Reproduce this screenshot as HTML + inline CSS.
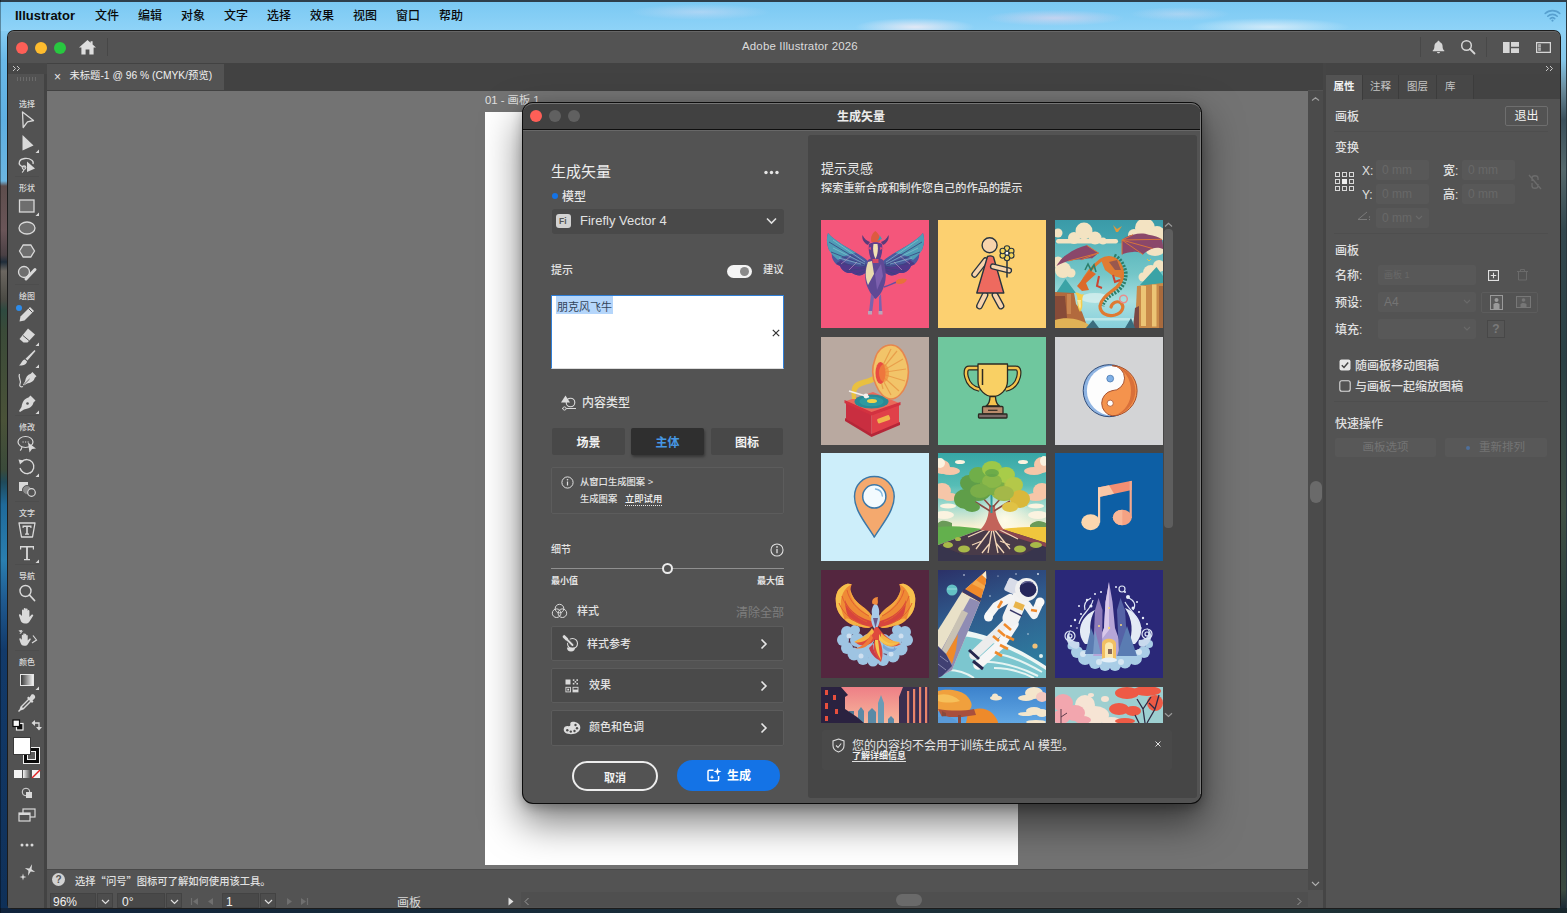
<!DOCTYPE html>
<html lang="zh-CN">
<head>
<meta charset="utf-8">
<title>Adobe Illustrator 2026</title>
<style>
*{box-sizing:border-box;margin:0;padding:0}
html,body{width:1567px;height:913px;overflow:hidden;background:#1f3a4a}
body{font-family:"Liberation Sans","Noto Sans CJK SC",sans-serif;color:#e6e6e6;font-size:12px;position:relative}
.abs{position:absolute}
.t{position:absolute;white-space:nowrap;line-height:1}
svg{position:absolute;overflow:visible}
/* desktop */
#desk{left:0;top:0;width:1567px;height:913px;background:linear-gradient(180deg,#7ecbf3 0,#86cdf2 30px,#6ab9e8 60px,#5fb0e2 120px,#6bb5e0 181px,#5d4d4c 186px,#6a5558 230px,#4a4044 255px,#1f2d3a 262px,#6b6660 271px,#4a4a44 300px,#2e4a40 310px,#3a4a38 330px,#4a5238 420px,#3a4a3a 470px,#1f4a5a 482px,#1f6a9a 505px,#2a7fb0 560px,#1f5a90 600px,#123a6a 650px,#0f3058 913px)}
#deskR{left:1556px;top:30px;width:11px;height:883px;background:linear-gradient(180deg,#8fd2f6 0,#86c8ea 30px,#6a8a9a 60px,#3a4f5a 90px,#55686c 140px,#33474e 200px,#2a4044 330px,#3f4f44 480px,#2a3e3c 600px,#27383a 760px,#3b4a40 860px,#1c2a34 878px,#16222c 883px)}
#menubar{left:0;top:0;width:1567px;height:31px;background:radial-gradient(ellipse 60px 9px at 915px 27px,rgba(255,240,245,.75),rgba(255,240,245,0)),radial-gradient(ellipse 70px 8px at 1055px 18px,rgba(245,215,235,.55),rgba(245,215,235,0)),radial-gradient(ellipse 80px 9px at 1270px 27px,rgba(255,250,250,.6),rgba(255,250,250,0)),radial-gradient(ellipse 70px 8px at 700px 12px,rgba(235,225,245,.4),rgba(235,225,245,0)),radial-gradient(ellipse 50px 7px at 1180px 14px,rgba(240,225,240,.35),rgba(240,225,240,0)),linear-gradient(180deg,#79c8f3 0,#8fd3f7 100%)}
#menubar .t{color:#0a0a0a;top:10px;font-size:12px;font-weight:500}
/* app window */
#win{left:8px;top:31px;width:1552px;height:877px;background:#535353;border-radius:6px 6px 4px 4px;overflow:hidden;box-shadow:0 0 0 1px #1c1c1c}

/* chrome */
#titlebar{left:8px;top:31px;width:1552px;height:32px;background:#535353;border-radius:6px 6px 0 0;border-top:1px solid #666}
#tabbar{left:8px;top:63px;width:1318px;height:27px;background:#424242}
#tab{left:47px;top:64px;width:177px;height:26px;background:#535353}
#tools{left:8px;top:63px;width:39px;height:845px;background:#525252;border-right:3px solid #434343}
#toolstop{left:8px;top:63px;width:39px;height:11px;background:#474747}
#canvas{left:47px;top:90px;width:1261px;height:779px;background:#737373;border-top:1px solid #424242}
#artboard{left:485px;top:112px;width:533px;height:753px;background:#fff}
#vscroll{left:1308px;top:91px;width:15px;height:799px;background:#4b4b4b}
#helpbar{left:47px;top:869px;width:1261px;height:21px;background:#535353;border-top:1px solid #484848}
#botbar{left:47px;top:890px;width:1277px;height:18px;background:#535353}
#hscroll{left:521px;top:892px;width:787px;height:15px;background:#4f4f4f}
#rgap{left:1323px;top:63px;width:3px;height:845px;background:#454545}
#rpanel{left:1326px;top:63px;width:234px;height:845px;background:#535353}
#rtop{left:1326px;top:63px;width:234px;height:11px;background:#444}
#rtabs{left:1326px;top:74px;width:234px;height:25px;background:#434343}
.rtab{position:absolute;top:75px;height:24px;background:#474747;color:#c4c4c4;font-size:10.5px;line-height:22px;text-align:center;border-right:1px solid #3c3c3c}
.lbl{position:absolute;white-space:nowrap;line-height:1;font-size:8px;font-weight:500;color:#dadada;left:7px;width:40px;text-align:center}
.tool{left:17px;width:20px;height:20px}
.rp{color:#e0e0e0;font-size:12px;font-weight:500;margin-top:1px}
.hr{position:absolute;left:1334px;width:214px;height:1px;background:#4e4e4e}
.fld{position:absolute;background:#585858;border-radius:2px;color:#686868;font-size:12px;line-height:21px;padding-left:6px}

/* dialog */
#dlg{left:523px;top:103px;width:678px;height:700px;background:#535353;border-radius:10px;box-shadow:0 0 0 1px #0c0c0c,0 18px 38px 2px rgba(0,0,0,.5),0 4px 12px rgba(0,0,0,.28)}
#dlgtitle{left:523px;top:103px;width:678px;height:27px;background:#414141;border-radius:10px 10px 0 0;border-top:1px solid #747474;border-bottom:1px solid #0e0e0e}
#dlgright{left:808px;top:135px;width:389px;height:663px;background:#464646;border-radius:3px}
.d{color:#e4e4e4}
.row{position:absolute;left:551px;width:233px;height:35.5px;background:#4a4a4a;border:1px solid #5c5c5c;border-radius:2px}
.seg{position:absolute;top:428px;height:27px;background:#484848;border-radius:2px;color:#f2f2f2;font-size:12px;font-weight:bold;text-align:center;line-height:30px}
.th{position:absolute;width:108px;height:108px;overflow:hidden}
.th svg{left:0;top:0}
</style>
</head>
<body>
<div id="desk" class="abs"></div>
<div id="deskR" class="abs"></div>
<div id="menubar" class="abs">
  <span class="t" style="left:15px;top:9px;font-weight:bold;font-size:13px">Illustrator</span>
  <span class="t" style="left:95px">文件</span>
  <span class="t" style="left:138px">编辑</span>
  <span class="t" style="left:181px">对象</span>
  <span class="t" style="left:224px">文字</span>
  <span class="t" style="left:267px">选择</span>
  <span class="t" style="left:310px">效果</span>
  <span class="t" style="left:353px">视图</span>
  <span class="t" style="left:396px">窗口</span>
  <span class="t" style="left:439px">帮助</span>
</div>
<div class="abs" style="left:0;top:0;width:1567px;height:1.5px;background:#2e3f4c"></div><div class="abs" style="left:1566px;top:0;width:1px;height:913px;background:#2a3840"></div>
<div class="abs" style="left:0;top:908px;width:1567px;height:5px;background:linear-gradient(90deg,#10233c 0,#14283a 300px,#1a2e38 800px,#1e3236 1300px,#18262c 1567px)"></div><div class="abs" style="left:0;top:0;width:1px;height:913px;background:rgba(0,0,0,.35)"></div>
<div id="win" class="abs"></div>
<div id="titlebar" class="abs"></div>
<div id="tabbar" class="abs"></div>
<div id="tab" class="abs"></div>
<div id="canvas" class="abs"></div>
<div id="artboard" class="abs"></div>
<div id="tools" class="abs"></div>
<div id="toolstop" class="abs"></div>
<div id="vscroll" class="abs"></div>
<div id="helpbar" class="abs"></div>
<div id="botbar" class="abs"></div>
<div id="hscroll" class="abs"></div>
<div id="rgap" class="abs"></div>
<div id="rpanel" class="abs"></div>
<div id="rtop" class="abs"></div>
<div id="rtabs" class="abs"></div>
<!--TITLE-->
<div class="abs" style="left:16px;top:42px;width:12px;height:12px;border-radius:50%;background:#fe5f57"></div>
<div class="abs" style="left:35px;top:42px;width:12px;height:12px;border-radius:50%;background:#febc2e"></div>
<div class="abs" style="left:54px;top:42px;width:12px;height:12px;border-radius:50%;background:#28c840"></div>
<svg style="left:78px;top:39px" width="19" height="17" viewBox="0 0 19 17"><path d="M9.5 1 L1 8.6 H3.4 V15.5 H7.6 V10.6 H11.4 V15.5 H15.6 V8.6 H18 L14.6 5.5 V2.3 H12.6 V3.8 Z" fill="#dedede"/></svg>
<div class="abs" style="left:107px;top:38px;width:1px;height:18px;background:#474747"></div>
<span class="t" style="left:742px;top:41px;font-size:11.5px;color:#dcdcdc;letter-spacing:0.15px">Adobe Illustrator 2026</span>
<svg style="left:1544px;top:9px" width="17" height="13" viewBox="0 0 17 13"><g fill="none" stroke="#57a0cf" stroke-width="1.6" stroke-linecap="round"><path d="M1.2 4.5 C5 .6 12 .6 15.8 4.5"/><path d="M3.8 7.2 C6.3 4.7 10.7 4.7 13.2 7.2"/><path d="M6.3 9.7 C7.5 8.6 9.5 8.6 10.7 9.7"/></g><circle cx="8.5" cy="11.6" r="1.1" fill="#57a0cf"/></svg>
<div class="abs" style="left:1420px;top:37px;width:1px;height:20px;background:#484848"></div>
<div class="abs" style="left:1486px;top:37px;width:1px;height:20px;background:#484848"></div>
<svg style="left:1432px;top:40px" width="13" height="14" viewBox="0 0 13 14"><path d="M6.5 .8 C7.2 .8 7.6 1.3 7.6 2 C9.8 2.6 10.6 4.5 10.6 6.5 C10.6 8.8 11.3 9.8 12.3 10.6 V11.2 H.7 V10.6 C1.7 9.8 2.4 8.8 2.4 6.5 C2.4 4.5 3.2 2.6 5.4 2 C5.4 1.3 5.8 .8 6.5 .8Z" fill="#d6d6d6"/><path d="M5 12 H8 C8 13.8 5 13.8 5 12Z" fill="#d6d6d6"/></svg>
<svg style="left:1460px;top:39px" width="16" height="16" viewBox="0 0 16 16"><circle cx="6.5" cy="6.5" r="4.8" fill="none" stroke="#d6d6d6" stroke-width="1.5"/><path d="M10 10 L14.5 14.5" stroke="#d6d6d6" stroke-width="1.8" stroke-linecap="round"/></svg>
<svg style="left:1503px;top:41.5px" width="16" height="11" viewBox="0 0 17 12" preserveAspectRatio="none"><rect x="0" y="0" width="7" height="12" fill="#d6d6d6"/><rect x="8.5" y="0" width="8.5" height="5.2" fill="#d6d6d6"/><rect x="8.5" y="6.8" width="8.5" height="5.2" fill="#d6d6d6"/></svg>
<svg style="left:1536px;top:41.5px" width="15" height="11" viewBox="0 0 17 12" preserveAspectRatio="none"><rect x=".7" y=".7" width="15.6" height="10.6" fill="none" stroke="#d6d6d6" stroke-width="1.4"/><rect x="2.5" y="2.6" width="3" height="6.8" fill="#d6d6d6"/><path d="M2.5 4.3 h3 M2.5 6 h3 M2.5 7.7 h3" stroke="#535353" stroke-width=".7"/></svg>
<!--TAB-->
<span class="t" style="left:54px;top:71px;font-size:12px;color:#e8e8e8">×</span>
<span class="t" style="left:69.5px;top:71px;font-size:10.3px;color:#f0f0f0">未标题-1 @ 96 % (CMYK/预览)</span>
<span class="t" style="left:485px;top:95px;font-size:11.3px;color:#e0e0e0">01 - 画板 1</span>
<!--TOOLS-START-->
<svg style="left:12px;top:65px" width="9" height="7"><path d="M1 1 L3.5 3.5 L1 6 M5 1 L7.5 3.5 L5 6" fill="none" stroke="#c8c8c8" stroke-width="1"/></svg>
<div class="abs" style="left:17px;top:77px;width:20px;height:4px;background:repeating-linear-gradient(90deg,#6a6a6a 0 1px,transparent 1px 3px)"></div>
<span class="lbl" style="top:100.5px">选择</span>
<svg style="left:16px;top:109px" width="22" height="22" viewBox="0 0 22 22"><path d="M6.5 3 L17.5 11.5 L11.5 12.8 L7.2 18.500Z" fill="none" stroke="#d9d9d9" stroke-width="1.3" stroke-linejoin="round"/></svg>
<svg style="left:16px;top:132px" width="22" height="22" viewBox="0 0 22 22"><path d="M6.5 3 L17.5 13.5 L6.5 18.500Z" fill="#d9d9d9"/><path d="M23 17.5 V21 H19.5Z" fill="#d9d9d9"/></svg>
<svg style="left:16px;top:154px" width="22" height="22" viewBox="0 0 22 22"><path d="M9 13 C4 13 2.5 10 3.5 7.5 C5 4 12 3.5 15.5 6 C17 7 17.5 8.5 17 10" fill="none" stroke="#d9d9d9" stroke-width="1.3"/><circle cx="8" cy="13.5" r="1.8" fill="none" stroke="#d9d9d9" stroke-width="1.1"/><path d="M8 15 C8 17 7 18 6 18.5" fill="none" stroke="#d9d9d9" stroke-width="1.1"/><path d="M11 7.5 L19 14.5 L11 18Z" fill="#d9d9d9"/></svg>
<span class="lbl" style="top:184.5px">形状</span>
<svg style="left:16px;top:195px" width="22" height="22" viewBox="0 0 22 22"><rect x="3.5" y="5" width="14.5" height="12" fill="#6e6e6e" stroke="#d9d9d9" stroke-width="1.3"/><path d="M23 17.5 V21 H19.5Z" fill="#d9d9d9"/></svg>
<svg style="left:16px;top:217px" width="22" height="22" viewBox="0 0 22 22"><ellipse cx="11" cy="11" rx="8" ry="6" fill="#6e6e6e" stroke="#d9d9d9" stroke-width="1.3"/></svg>
<svg style="left:16px;top:240px" width="22" height="22" viewBox="0 0 22 22"><path d="M3.5 11 L7.2 5 H14.8 L18.5 11 L14.8 17 H7.200Z" fill="#6e6e6e" stroke="#d9d9d9" stroke-width="1.3"/></svg>
<svg style="left:16px;top:262px" width="22" height="22" viewBox="0 0 22 22"><circle cx="8" cy="10" r="5.5" fill="#6e6e6e" stroke="#d9d9d9" stroke-width="1.3"/><path d="M10 17 L19 7.5" stroke="#d9d9d9" stroke-width="3" stroke-linecap="round"/></svg>
<span class="lbl" style="top:292.5px">绘图</span>
<div class="abs" style="left:16px;top:305px;width:6px;height:6px;border-radius:50%;background:#2d8ceb"></div>
<svg style="left:16px;top:303px" width="22" height="22" viewBox="0 0 22 22"><path d="M14 4 L18 8 L8.5 17.5 L3.5 18.5 L4.5 13.500Z" fill="#d9d9d9"/><path d="M12.5 5.5 L16.5 9.5" stroke="#535353" stroke-width="1"/></svg>
<svg style="left:16px;top:325px" width="22" height="22" viewBox="0 0 22 22"><path d="M12 3.5 L19 9.5 L11.5 17.5 H7.5 L3.5 14Z" fill="#d9d9d9"/><path d="M7 10.5 L13.5 16" stroke="#535353" stroke-width="1"/><path d="M23 17.5 V21 H19.5Z" fill="#d9d9d9"/></svg>
<svg style="left:16px;top:347px" width="22" height="22" viewBox="0 0 22 22"><path d="M18.5 3 L19.5 4 L11.5 13.5 L9.5 11.800Z" fill="#d9d9d9"/><path d="M9 12.5 L11 14.5 C10.5 17.5 7 19 3 18.5 C5.5 17 5.5 13 9 12.500Z" fill="#d9d9d9"/><path d="M23 17.5 V21 H19.5Z" fill="#d9d9d9"/></svg>
<svg style="left:16px;top:370px" width="22" height="22" viewBox="0 0 22 22"><g transform="translate(4.5 0) scale(.82)"><path d="M14.5 2.5 L19.5 7.5 L17.5 9.5 C16.5 13.5 13.5 15.5 8 16.5 L4 19 L3 18 L5.5 14 C6.5 8.5 8.5 5.5 12.5 4.500Z" fill="#d9d9d9"/><path d="M4 18 L11 11" stroke="#535353" stroke-width="1"/></g><path d="M3.5 4 C1.5 8 6 10 4 14 C3 16.5 5 17.5 7 16.5" fill="none" stroke="#d9d9d9" stroke-width="1.2"/></svg>
<svg style="left:16px;top:393px" width="22" height="22" viewBox="0 0 22 22"><path d="M14.5 2.5 L19.5 7.5 L17.5 9.5 C16.5 13.5 13.5 15.5 8 16.5 L4 19 L3 18 L5.5 14 C6.5 8.5 8.5 5.5 12.5 4.500Z" fill="#d9d9d9"/><circle cx="11.5" cy="10.5" r="1.3" fill="#535353"/><path d="M23 17.5 V21 H19.5Z" fill="#d9d9d9"/></svg>
<span class="lbl" style="top:423.5px">修改</span>
<svg style="left:16px;top:433px" width="22" height="22" viewBox="0 0 22 22"><ellipse cx="9.5" cy="9" rx="7.5" ry="5.5" fill="none" stroke="#d9d9d9" stroke-width="1.2"/><path d="M6.5 9 h1.2 M9 9 h1.2 M11.5 9 h1.2" stroke="#d9d9d9" stroke-width="1.2"/><path d="M12 9.5 L20 15.5 L16 16 L13.5 19.500Z" fill="#d9d9d9"/><path d="M6 14 C5.5 16 5 17 4 17.5" stroke="#d9d9d9" stroke-width="1.1" fill="none"/></svg>
<svg style="left:16px;top:456px" width="22" height="22" viewBox="0 0 22 22"><path d="M5.5 6 A7 7 0 1 1 4 12" fill="none" stroke="#d9d9d9" stroke-width="1.3"/><path d="M4.5 12.5 A7 7 0 0 0 16 16" fill="none" stroke="#d9d9d9" stroke-width="1" stroke-dasharray="1.5 1.5"/><path d="M2.5 3.5 L8 4.5 L4 8.500Z" fill="#d9d9d9"/><path d="M23 17.5 V21 H19.5Z" fill="#d9d9d9"/></svg>
<svg style="left:16px;top:478px" width="22" height="22" viewBox="0 0 22 22"><rect x="3" y="4" width="9" height="9" fill="#d9d9d9"/><circle cx="11" cy="12" r="4.5" fill="#8a8a8a" stroke="#535353" stroke-width="1"/><circle cx="15.5" cy="14.5" r="3.8" fill="#535353" stroke="#d9d9d9" stroke-width="1.2"/></svg>
<span class="lbl" style="top:509.5px">文字</span>
<svg style="left:16px;top:519px" width="22" height="22" viewBox="0 0 22 22"><path d="M3 4 H19 L16.5 18 H5.500Z" fill="none" stroke="#d9d9d9" stroke-width="1.3" stroke-linejoin="round"/><path d="M6.5 6.5 H15.5 V9 H14.3 V8 H11.8 V14.5 H13 V15.8 H9 V14.5 H10.2 V8 H7.7 V9 H6.500Z" fill="#d9d9d9"/></svg>
<svg style="left:16px;top:542px" width="22" height="22" viewBox="0 0 22 22"><path d="M4 4 H18 V7.5 H16.8 V5.6 H11.9 V17 H14 V18.3 H8 V17 H10.1 V5.6 H5.2 V7.5 H4Z" fill="#d9d9d9"/><path d="M23 17.5 V21 H19.5Z" fill="#d9d9d9"/></svg>
<span class="lbl" style="top:572.5px">导航</span>
<svg style="left:16px;top:582px" width="22" height="22" viewBox="0 0 22 22"><circle cx="9.5" cy="9" r="5.5" fill="none" stroke="#d9d9d9" stroke-width="1.4"/><path d="M13.5 13 L18.5 18.5" stroke="#d9d9d9" stroke-width="1.8" stroke-linecap="round"/></svg>
<svg style="left:16px;top:605px" width="22" height="22" viewBox="0 0 22 22"><path d="M6 11 V5.5 C6 4.3 7.8 4.3 7.8 5.5 V9.5 V3.8 C7.8 2.6 9.7 2.6 9.7 3.8 V9.5 V4.3 C9.7 3.1 11.6 3.1 11.6 4.3 V9.8 V6 C11.6 4.8 13.4 4.8 13.4 6 V12 L15.5 9.8 C16.5 8.8 17.8 9.8 17 11 L13.5 16.5 C12.5 18 11.5 18.5 10 18.5 H9 C6.5 18.5 5 17 4.5 15 L3 10.5 C2.6 9.2 4.2 8.6 4.8 9.800Z" fill="#d9d9d9"/></svg>
<svg style="left:16px;top:628px" width="22" height="22" viewBox="0 0 22 22"><g transform="translate(1 3) scale(.8)"><path d="M6 11 V5.5 C6 4.3 7.8 4.3 7.8 5.5 V9.5 V3.8 C7.8 2.6 9.7 2.6 9.7 3.8 V9.5 V4.3 C9.7 3.1 11.6 3.1 11.6 4.3 V9.8 V6 C11.6 4.8 13.4 4.8 13.4 6 V12 L15.5 9.8 C16.5 8.8 17.8 9.8 17 11 L13.5 16.5 C12.5 18 11.5 18.5 10 18.5 H9 C6.5 18.5 5 17 4.5 15 L3 10.5 C2.6 9.2 4.2 8.6 4.8 9.800Z" fill="#d9d9d9"/></g><path d="M4 6 A8 8 0 0 1 8 2.5" fill="none" stroke="#d9d9d9" stroke-width="1" stroke-dasharray="1.3 1.3"/><path d="M17 7.5 L20.5 12 L16 15" fill="none" stroke="#d9d9d9" stroke-width="1.2"/><path d="M2.5 2.5 L6 2 L5.5 5.500Z" fill="#d9d9d9"/></svg>
<span class="lbl" style="top:658.5px">颜色</span>
<div class="abs" style="left:20px;top:674px;width:14px;height:12px;border:1px solid #e6e6e6;background:linear-gradient(90deg,#3a3a3a,#f2f2f2)"></div>
<svg style="left:16px;top:669px" width="22" height="22" viewBox="0 0 22 22"><path d="M23 17.5 V21 H19.5Z" fill="#d9d9d9"/></svg>
<svg style="left:16px;top:692px" width="22" height="22" viewBox="0 0 22 22"><path d="M15.5 2.5 C17.5 1.5 20 4 19 6 L16.5 8.5 L17.5 9.5 L16 11 L15 10 L7.5 17.5 L4.5 18.5 L3 20 L2 19 L3.5 17.5 L4.5 14.5 L12 7 L11 6 L12.5 4.5 L13.5 5.500Z" fill="#d9d9d9"/><path d="M6 15 L13 8 L14 9 L7 16Z" fill="#535353"/></svg>
<svg style="left:12px;top:719px" width="12" height="12"><rect x="4.5" y="4.5" width="6.5" height="6.5" fill="#0a0a0a" stroke="#f0f0f0" stroke-width="1.2"/><rect x="1" y="1" width="6.5" height="6.5" fill="#f8f8f8" stroke="#0a0a0a" stroke-width="1.2"/></svg>
<svg style="left:31px;top:719px" width="12" height="12"><path d="M2.5 4 H8 V9" fill="none" stroke="#d9d9d9" stroke-width="1.3"/><path d="M0.5 4 L4 1 V7Z M8 11.5 L5 8 H11Z" fill="#d9d9d9"/></svg>
<div class="abs" style="left:23px;top:747px;width:17px;height:17px;background:#0a0a0a;border:1px solid #f0f0f0"></div><div class="abs" style="left:27px;top:751px;width:9px;height:9px;background:#5a5a5a;border:1.5px solid #f4f4f4"></div>
<div class="abs" style="left:13px;top:737px;width:18px;height:18px;background:#fff;border:1px solid #3a3a3a"></div>
<div class="abs" style="left:14px;top:770px;width:8px;height:8px;background:#f4f4f4"></div><div class="abs" style="left:23px;top:770px;width:8px;height:8px;background:linear-gradient(90deg,#f4f4f4,#444)"></div><div class="abs" style="left:32px;top:770px;width:8px;height:8px;background:#f4f4f4"></div><svg style="left:32px;top:770px" width="8" height="8"><path d="M0 8 L8 0" stroke="#e02020" stroke-width="1.5"/></svg>
<svg style="left:21px;top:787px" width="12" height="12"><circle cx="5" cy="5" r="3.8" fill="none" stroke="#d9d9d9" stroke-width="1"/><rect x="5" y="5" width="6" height="6" fill="#d9d9d9"/></svg>
<svg style="left:18px;top:808px" width="18" height="14"><rect x="5" y="1" width="12" height="8" fill="#535353" stroke="#d9d9d9" stroke-width="1.2"/><rect x="1" y="5" width="11" height="8" fill="#535353" stroke="#d9d9d9" stroke-width="1.2"/><rect x="1" y="5" width="11" height="2" fill="#d9d9d9"/></svg>
<svg style="left:20px;top:843px" width="14" height="4"><circle cx="2" cy="2" r="1.5" fill="#d9d9d9"/><circle cx="7" cy="2" r="1.5" fill="#d9d9d9"/><circle cx="12" cy="2" r="1.5" fill="#d9d9d9"/></svg>
<svg style="left:18px;top:863px" width="18" height="18" viewBox="0 0 18 18"><path d="M12 1 L13.2 5.8 L17.5 7 L13.2 8.2 L12 13 L10.8 8.2 L6.5 7 L10.8 5.800Z" fill="#d9d9d9" transform="rotate(20 12 7)"/><path d="M5 10.5 L5.8 13.2 L8.5 14 L5.8 14.8 L5 17.5 L4.2 14.8 L1.5 14 L4.2 13.200Z" fill="#d9d9d9"/></svg>
<div class="abs" style="left:15px;top:176px;width:24px;height:1px;background:#4d4d4d"></div>
<div class="abs" style="left:15px;top:284px;width:24px;height:1px;background:#4d4d4d"></div>
<div class="abs" style="left:15px;top:415px;width:24px;height:1px;background:#4d4d4d"></div>
<div class="abs" style="left:15px;top:501px;width:24px;height:1px;background:#4d4d4d"></div>
<div class="abs" style="left:15px;top:564px;width:24px;height:1px;background:#4d4d4d"></div>
<div class="abs" style="left:15px;top:650px;width:24px;height:1px;background:#4d4d4d"></div>
<!--TOOLS-END-->
<svg style="left:1545px;top:65px" width="9" height="7"><path d="M1 1 L3.5 3.5 L1 6 M5 1 L7.5 3.5 L5 6" fill="none" stroke="#c8c8c8" stroke-width="1"/></svg>
<div class="rtab" style="left:1326px;width:37px;background:#535353;color:#f2f2f2;font-weight:bold;height:25px">属性</div>
<div class="rtab" style="left:1363px;width:36px">注释</div>
<div class="rtab" style="left:1399px;width:38px">图层</div>
<div class="rtab" style="left:1437px;width:37px;text-align:left;padding-left:8px">库</div>
<span class="t rp" style="left:1335px;top:110px">画板</span>
<div class="abs" style="left:1505px;top:106px;width:43px;height:20px;border:1px solid #6e6e6e;border-radius:2px;color:#f2f2f2;font-size:12px;text-align:center;line-height:18px">退出</div>
<div class="hr" style="top:131px"></div>
<span class="t rp" style="left:1335px;top:141px">变换</span>
<svg style="left:1335px;top:172px" width="19" height="19" viewBox="0 0 19 19"><g fill="none" stroke="#d8d8d8" stroke-width="1"><rect x=".5" y=".5" width="4" height="4"/><rect x="7.5" y=".5" width="4" height="4"/><rect x="14.5" y=".5" width="4" height="4"/><rect x=".5" y="7.5" width="4" height="4"/><rect x="14.5" y="7.5" width="4" height="4"/><rect x=".5" y="14.5" width="4" height="4"/><rect x="7.5" y="14.5" width="4" height="4"/><rect x="14.5" y="14.5" width="4" height="4"/></g><rect x="7" y="7" width="5" height="5" fill="#f2f2f2"/></svg>
<span class="t rp" style="left:1362px;top:164px">X:</span>
<span class="t rp" style="left:1362px;top:188px">Y:</span>
<span class="t rp" style="left:1443px;top:164px">宽:</span>
<span class="t rp" style="left:1443px;top:188px">高:</span>
<div class="fld" style="left:1376px;top:160px;width:53px;height:20px">0 mm</div>
<div class="fld" style="left:1376px;top:184px;width:53px;height:20px">0 mm</div>
<div class="fld" style="left:1462px;top:160px;width:53px;height:20px">0 mm</div>
<div class="fld" style="left:1462px;top:184px;width:53px;height:20px">0 mm</div>
<div class="fld" style="left:1376px;top:208px;width:53px;height:20px">0 mm</div>
<svg style="left:1357px;top:211px" width="14" height="10"><path d="M10 1 L1 8.5 H10" fill="none" stroke="#7a7a7a" stroke-width="1"/><path d="M12.5 6 v.1 M12.5 8.5 v.1" stroke="#7a7a7a" stroke-width="1.3" stroke-linecap="round"/></svg>
<svg style="left:1415px;top:215px" width="8" height="6"><path d="M1 1 L4 4 L7 1" fill="none" stroke="#6a6a6a" stroke-width="1.1"/></svg>
<svg style="left:1528px;top:173px" width="14" height="18" viewBox="0 0 14 18"><path d="M4 8 V5 C4 2 10 2 10 5 V7 M4 10 V13 C4 16 10 16 10 13 V11 M1 2 L13 16" fill="none" stroke="#6c6c6c" stroke-width="1.3"/></svg>
<div class="hr" style="top:233px"></div>
<span class="t rp" style="left:1335px;top:244px">画板</span>
<span class="t rp" style="left:1335px;top:269px">名称:</span>
<span class="t rp" style="left:1335px;top:296px">预设:</span>
<span class="t rp" style="left:1335px;top:323px">填充:</span>
<div class="fld" style="left:1378px;top:265px;width:98px;height:20px;font-size:9px">画板 1</div>
<div class="fld" style="left:1378px;top:292px;width:98px;height:20px;color:#747474">A4</div>
<div class="fld" style="left:1378px;top:319px;width:98px;height:20px"></div>
<svg style="left:1463px;top:299px" width="8" height="6"><path d="M1 1 L4 4 L7 1" fill="none" stroke="#6a6a6a" stroke-width="1.1"/></svg>
<svg style="left:1463px;top:326px" width="8" height="6"><path d="M1 1 L4 4 L7 1" fill="none" stroke="#6a6a6a" stroke-width="1.1"/></svg>
<svg style="left:1487.5px;top:269.5px" width="11" height="11" viewBox="0 0 12 12"><rect x=".6" y=".6" width="10.8" height="10.8" fill="none" stroke="#e0e0e0" stroke-width="1.2"/><path d="M6 3 V9 M3 6 H9" stroke="#e0e0e0" stroke-width="1.2"/></svg>
<svg style="left:1517px;top:268px" width="11" height="13"><path d="M1.5 3.5 H9.5 V12 H1.500Z M3.5 3 V1.5 H7.5 V3 M0 3.5 H11" fill="none" stroke="#6a6a6a" stroke-width="1"/></svg>
<div class="abs" style="left:1481px;top:292px;width:57px;height:21px;border:1px solid #5c5c5c;border-radius:2px"></div>
<svg style="left:1490px;top:295px" width="13" height="15"><rect x=".5" y=".5" width="12" height="14" fill="#5a5a5a" stroke="#9a9a9a"/><circle cx="6.5" cy="5" r="2" fill="#9a9a9a"/><path d="M3.5 14 V9.5 C3.5 7.5 9.5 7.5 9.5 9.5 V14Z" fill="#9a9a9a"/></svg>
<svg style="left:1516px;top:296px" width="15" height="12"><rect x=".5" y=".5" width="14" height="11" fill="#5a5a5a" stroke="#777"/><circle cx="7.5" cy="4" r="1.8" fill="#777"/><path d="M4.5 11 V8.5 C4.5 6.5 10.5 6.5 10.5 8.5 V11Z" fill="#777"/></svg>
<div class="abs" style="left:1487px;top:320px;width:18px;height:18px;border:1px solid #484848;background:#565656;color:#7a7a7a;font-size:12px;font-weight:bold;text-align:center;line-height:16px">?</div>
<svg style="left:1339px;top:359px" width="12" height="12"><rect x=".5" y=".5" width="11" height="11" rx="2" fill="#e6e6e6"/><path d="M2.8 6.2 L5 8.5 L9.2 3.5" fill="none" stroke="#444" stroke-width="1.5"/></svg>
<svg style="left:1339px;top:380px" width="12" height="12"><rect x=".8" y=".8" width="10.4" height="10.4" rx="2" fill="none" stroke="#dcdcdc" stroke-width="1.1"/></svg>
<span class="t rp" style="left:1355px;top:359px">随画板移动图稿</span>
<span class="t rp" style="left:1355px;top:380px">与画板一起缩放图稿</span>
<div class="hr" style="top:401px"></div>
<span class="t rp" style="left:1335px;top:416.5px">快速操作</span>
<div class="abs" style="left:1335px;top:438px;width:101px;height:19px;background:#585858;border-radius:2px;color:#747474;font-size:11.500px;text-align:center;line-height:19px">画板选项</div>
<div class="abs" style="left:1445px;top:438px;width:102px;height:19px;background:#585858;border-radius:2px;color:#747474;font-size:11.500px;text-align:center;line-height:19px;padding-left:12px">重新排列</div>
<div class="abs" style="left:1466px;top:446px;width:4px;height:4px;border-radius:50%;background:#4f6f9a"></div>

<div class="abs" style="left:52px;top:873px;width:13px;height:13px;border-radius:50%;background:#d2d2d2;color:#535353;font-size:10px;font-weight:bold;text-align:center;line-height:13px">?</div>
<span class="t" style="left:75px;top:876px;font-size:10.3px;font-weight:500;color:#e0e0e0">选择<span style="font-family:'Noto Sans CJK SC',sans-serif">“</span>问号<span style="font-family:'Noto Sans CJK SC',sans-serif">”</span>图标可了解如何使用该工具。</span>
<div class="abs" style="left:50px;top:893px;width:46px;height:15px;background:#494949;border:1px solid #434343"></div>
<div class="abs" style="left:97px;top:893px;width:16px;height:15px;background:#4d4d4d;border:1px solid #434343"></div>
<div class="abs" style="left:117px;top:893px;width:48px;height:15px;background:#494949;border:1px solid #434343"></div>
<div class="abs" style="left:166px;top:893px;width:16px;height:15px;background:#4d4d4d;border:1px solid #434343"></div>
<div class="abs" style="left:222px;top:893px;width:37px;height:15px;background:#494949;border:1px solid #434343"></div>
<div class="abs" style="left:260px;top:893px;width:16px;height:15px;background:#4d4d4d;border:1px solid #434343"></div>
<span class="t" style="left:53px;top:896px;font-size:12px;color:#f0f0f0">96%</span>
<span class="t" style="left:122px;top:896px;font-size:12px;color:#f0f0f0">0°</span>
<span class="t" style="left:226px;top:896px;font-size:12px;color:#f0f0f0">1</span>
<svg style="left:101px;top:899px" width="9" height="6"><path d="M1 1 L4.5 4.5 L8 1" fill="none" stroke="#e0e0e0" stroke-width="1.2"/></svg>
<svg style="left:170px;top:899px" width="9" height="6"><path d="M1 1 L4.5 4.5 L8 1" fill="none" stroke="#e0e0e0" stroke-width="1.2"/></svg>
<svg style="left:264px;top:899px" width="9" height="6"><path d="M1 1 L4.5 4.5 L8 1" fill="none" stroke="#e0e0e0" stroke-width="1.2"/></svg>
<svg style="left:190px;top:897px" width="30" height="9"><path d="M1.5 1 V8" stroke="#6f6f6f" stroke-width="1.2"/><path d="M8 1 L3 4.5 L8 8Z M23 1 L18 4.5 L23 8Z" fill="#6f6f6f"/></svg>
<svg style="left:282px;top:897px" width="30" height="9"><path d="M5 1 L10 4.5 L5 8Z M19 1 L24 4.5 L19 8Z" fill="#6f6f6f"/><path d="M25.5 1 V8" stroke="#6f6f6f" stroke-width="1.2"/></svg>
<span class="t" style="left:397px;top:897px;font-size:12px;color:#d8d8d8">画板</span>
<svg style="left:508px;top:897px" width="6" height="9"><path d="M.5 .5 L5.5 4.5 L.5 8.500Z" fill="#e0e0e0"/></svg>
<svg style="left:524px;top:897px" width="6" height="9"><path d="M4.5 1 L1 4.5 L4.5 8" fill="none" stroke="#9a9a9a" stroke-width="1"/></svg>
<svg style="left:1296px;top:897px" width="6" height="9"><path d="M1.5 1 L5 4.5 L1.5 8" fill="none" stroke="#9a9a9a" stroke-width="1"/></svg>
<div class="abs" style="left:896px;top:894px;width:26px;height:12px;border-radius:6px;background:#6a6a6a"></div>
<svg style="left:1311px;top:96px" width="9" height="6"><path d="M1 4.5 L4.5 1.8 L8 4.5" fill="none" stroke="#a0a0a0" stroke-width="1.1"/></svg>
<svg style="left:1311px;top:881px" width="9" height="6"><path d="M1 1 L4.5 4.5 L8 1" fill="none" stroke="#b0b0b0" stroke-width="1.1"/></svg>
<div class="abs" style="left:1310px;top:481px;width:12px;height:22px;border-radius:6px;background:#6a6a6a"></div>

<div id="dlg" class="abs"></div>
<div id="dlgtitle" class="abs"></div>
<div id="dlgright" class="abs"></div><div class="abs" style="left:523px;top:130px;width:678px;height:1px;background:#686868"></div><div class="abs" style="left:1200px;top:112px;width:1px;height:682px;background:#7c7c7c"></div>
<div class="abs" style="left:530px;top:110px;width:12px;height:12px;border-radius:50%;background:#fe5f57"></div>
<div class="abs" style="left:549px;top:110px;width:12px;height:12px;border-radius:50%;background:#606060"></div>
<div class="abs" style="left:568px;top:110px;width:12px;height:12px;border-radius:50%;background:#606060"></div>
<span class="t d" style="left:837px;top:110.5px;font-size:12px;font-weight:bold;color:#ececec">生成矢量</span>
<span class="t d" style="left:551px;top:164px;font-size:15px;color:#ededed">生成矢量</span>
<svg style="left:764px;top:170px" width="15" height="5"><circle cx="2" cy="2.5" r="1.7" fill="#e6e6e6"/><circle cx="7.5" cy="2.5" r="1.7" fill="#e6e6e6"/><circle cx="13" cy="2.5" r="1.7" fill="#e6e6e6"/></svg>
<div class="abs" style="left:552px;top:193px;width:6px;height:6px;border-radius:50%;background:#1473e6"></div>
<span class="t d" style="left:562px;top:191px;font-size:12px;font-weight:500">模型</span>
<div class="abs" style="left:552px;top:209px;width:232px;height:25px;background:#494949;border-radius:3px"></div>
<div class="abs" style="left:556px;top:214px;width:15px;height:14px;background:#d2d2d2;border-radius:3px"></div>
<span class="t" style="left:559px;top:217px;font-size:8.5px;font-weight:bold;color:#555">Fi</span>
<span class="t d" style="left:580px;top:214px;font-size:13px;color:#e2e2e2">Firefly Vector 4</span>
<svg style="left:766px;top:217px" width="11" height="8"><path d="M1 1.5 L5.5 6 L10 1.5" fill="none" stroke="#e0e0e0" stroke-width="1.6"/></svg>
<span class="t d" style="left:551px;top:265px;font-size:11px;font-weight:500">提示</span>
<div class="abs" style="left:727px;top:265px;width:25px;height:13px;border-radius:7px;background:#f4f4f4"></div>
<div class="abs" style="left:740px;top:267px;width:9px;height:9px;border-radius:50%;background:#8a8a8a"></div>
<span class="t d" style="left:763px;top:265px;font-size:10.3px;font-weight:500">建议</span>
<div class="abs" style="left:551px;top:295px;width:233px;height:74px;background:#fff;border:1px solid #2f7fd8;border-bottom-color:#dcdcdc"></div>
<div class="abs" style="left:556px;top:296px;width:57px;height:18px;background:#b5d6fb"></div><span class="t" style="left:557px;top:300px;font-size:11px;color:#33455a;line-height:14px">朋克风飞牛</span>
<svg style="left:772px;top:329px" width="8" height="8"><path d="M0.8 0.8 L7.2 7.2 M7.2 0.8 L0.8 7.2" stroke="#333" stroke-width="1.2"/></svg>
<svg style="left:560px;top:394px" width="17" height="17" viewBox="0 0 17 17"><path d="M5.5 1.5 L10 8.5 H1 Z" fill="#dcdcdc"/><circle cx="10.5" cy="8.5" r="4.3" fill="none" stroke="#dcdcdc" stroke-width="1.1"/><path d="M2 14.5 H16" stroke="#dcdcdc" stroke-width="1"/><circle cx="4.5" cy="14.5" r="1.6" fill="#535353" stroke="#dcdcdc" stroke-width="1"/></svg>
<span class="t d" style="left:582px;top:397px;font-size:12px;font-weight:500">内容类型</span>
<div class="seg" style="left:552px;width:73px">场景</div>
<div class="seg" style="left:631px;width:73px;background:#2f2f2f;color:#4697e4;box-shadow:1px 2px 3px rgba(0,0,0,.35)">主体</div>
<div class="seg" style="left:711px;width:72px">图标</div>
<div class="abs" style="left:551px;top:467px;width:233px;height:47px;border:1px solid #5c5c5c;border-radius:2px;background:#515151"></div>
<svg style="left:561px;top:476px" width="13" height="13" viewBox="0 0 13 13"><circle cx="6.5" cy="6.5" r="5.6" fill="none" stroke="#e0e0e0" stroke-width="1"/><rect x="5.9" y="5.5" width="1.2" height="4" fill="#e0e0e0"/><circle cx="6.5" cy="3.7" r="0.8" fill="#e0e0e0"/></svg>
<span class="t d" style="left:580px;top:478px;font-size:9.3px;font-weight:500">从窗口生成图案 &gt;</span>
<span class="t d" style="left:580px;top:495px;font-size:9.3px;font-weight:500">生成图案</span>
<span class="t d" style="left:625px;top:495px;font-size:9.3px;font-weight:500;color:#f4f4f4;border-bottom:1px dotted #e8e8e8;padding-bottom:1px">立即试用</span>
<span class="t d" style="left:551px;top:545px;font-size:10px;font-weight:500">细节</span>
<svg style="left:770px;top:543px" width="14" height="14" viewBox="0 0 13 13"><circle cx="6.5" cy="6.5" r="5.6" fill="none" stroke="#e0e0e0" stroke-width="1"/><rect x="5.9" y="5.5" width="1.2" height="4" fill="#e0e0e0"/><circle cx="6.5" cy="3.7" r="0.8" fill="#e0e0e0"/></svg>
<div class="abs" style="left:551px;top:567.5px;width:233px;height:1.5px;background:#909090"></div>
<div class="abs" style="left:662px;top:563px;width:11px;height:11px;border-radius:50%;background:#535353;border:2px solid #ececec"></div>
<span class="t d" style="left:551px;top:576.5px;font-size:9px;font-weight:bold">最小值</span>
<span class="t d" style="left:757px;top:576.5px;font-size:9px;font-weight:bold">最大值</span>
<svg style="left:551px;top:603px" width="17" height="16" viewBox="0 0 17 16"><circle cx="8.5" cy="5.6" r="4.3" fill="none" stroke="#dcdcdc" stroke-width="1"/><circle cx="5.6" cy="10.2" r="4.3" fill="none" stroke="#dcdcdc" stroke-width="1"/><circle cx="11.4" cy="10.2" r="4.3" fill="none" stroke="#dcdcdc" stroke-width="1"/></svg>
<span class="t d" style="left:577px;top:606px;font-size:11px;font-weight:500">样式</span>
<span class="t" style="left:736px;top:607px;font-size:12px;color:#7e7e7e">清除全部</span>
<div class="row" style="top:625.5px"></div>
<div class="row" style="top:667.5px"></div>
<div class="row" style="top:710px"></div>
<span class="t d" style="left:587px;top:638.5px;font-size:11px;font-weight:500">样式参考</span>
<span class="t d" style="left:589px;top:679.5px;font-size:11px;font-weight:500">效果</span>
<span class="t d" style="left:589px;top:721.5px;font-size:11px;font-weight:500">颜色和色调</span>
<svg style="left:760px;top:637.5px" width="8" height="12"><path d="M1.5 1.5 L6 6 L1.5 10.5" fill="none" stroke="#e6e6e6" stroke-width="1.6"/></svg>
<svg style="left:760px;top:679.5px" width="8" height="12"><path d="M1.5 1.5 L6 6 L1.5 10.5" fill="none" stroke="#e6e6e6" stroke-width="1.6"/></svg>
<svg style="left:760px;top:721.5px" width="8" height="12"><path d="M1.5 1.5 L6 6 L1.5 10.5" fill="none" stroke="#e6e6e6" stroke-width="1.6"/></svg>
<svg style="left:562px;top:635px" width="18" height="17" viewBox="0 0 18 17"><circle cx="10.5" cy="8.5" r="5" fill="none" stroke="#dcdcdc" stroke-width="1.1"/><path d="M5 12.5 H13 A4 4 0 0 1 5 12.500Z" fill="#dcdcdc"/><path d="M2 1.5 L10.5 10" stroke="#535353" stroke-width="4.2" stroke-linecap="round"/><path d="M2.2 1.7 L4.5 4" stroke="#dcdcdc" stroke-width="3" stroke-linecap="round"/><path d="M4.5 4 L10.5 10" stroke="#dcdcdc" stroke-width="1.8" stroke-linecap="round"/></svg>
<svg style="left:565px;top:678.5px" width="14" height="14" viewBox="0 0 14 14"><rect x=".5" y=".5" width="5" height="5" fill="#dcdcdc"/><g fill="#dcdcdc"><rect x="7.8" y=".3" width="1.6" height="1.6"/><rect x="11.4" y=".3" width="1.6" height="1.6"/><rect x="9.6" y="2.1" width="1.6" height="1.6"/><rect x="7.8" y="3.9" width="1.6" height="1.6"/><rect x="11.4" y="3.9" width="1.6" height="1.6"/></g><rect x=".9" y="8.3" width="4.6" height="4.6" fill="none" stroke="#dcdcdc" stroke-width=".9"/><rect x="2.3" y="9.7" width="1.8" height="1.8" fill="#dcdcdc"/><rect x="8" y="8.3" width="5" height="4.6" fill="none" stroke="#dcdcdc" stroke-width=".9"/><rect x="8" y="10.6" width="5" height="2.3" fill="#dcdcdc"/></svg>
<svg style="left:562.5px;top:721px" width="18" height="14" viewBox="0 0 18 14"><path d="M9.5 .8 C14.5 .8 17.3 3.5 17.3 6.5 C17.3 10.5 13 13.2 8 13.2 C3.5 13.2 .7 11.3 .7 8.5 C.7 6 3 4.8 5.5 5.2 C7 5.4 7.6 4.6 7.3 3.3 C7 1.8 8 .8 9.5 .8Z" fill="#dcdcdc"/><g fill="#4a4a4a"><circle cx="4.3" cy="9.3" r="1.2"/><circle cx="7.8" cy="10.6" r="1.2"/><circle cx="11.5" cy="10" r="1.2"/><circle cx="14" cy="7.3" r="1.2"/><circle cx="12.5" cy="4" r="1.2"/></g></svg>

<div class="abs" style="left:572px;top:761px;width:86px;height:30px;border:2px solid #ededed;border-radius:15px;color:#f2f2f2;font-size:11px;font-weight:bold;text-align:center;line-height:30px">取消</div>
<div class="abs" style="left:677px;top:760px;width:103px;height:31px;background:#1473e6;border-radius:16px"></div>
<svg style="left:706px;top:767px" width="16" height="16" viewBox="0 0 16 16"><path d="M7.5 3.2 H3.2 Q2 3.2 2 4.4 V12.6 Q2 13.8 3.2 13.8 H11.4 Q12.6 13.8 12.6 12.6 V9" fill="none" stroke="#fff" stroke-width="1.5"/><path d="M11.5 0.5 L12.5 3.5 L15.5 4.5 L12.5 5.5 L11.5 8.5 L10.5 5.5 L7.5 4.5 L10.5 3.5 Z" fill="#fff"/><path d="M6 8 L6.6 9.6 L8.2 10.2 L6.6 10.8 L6 12.4 L5.4 10.8 L3.8 10.2 L5.4 9.6Z" fill="#fff"/></svg>
<span class="t" style="left:727px;top:770px;font-size:12px;font-weight:bold;color:#fff">生成</span>

<!--THUMBS-START-->
<svg width="0" height="0" style="left:0;top:0"><defs><filter id="b4" x="-5%" y="-5%" width="110%" height="110%"><feGaussianBlur stdDeviation="0.4"/></filter><filter id="b5" x="-5%" y="-5%" width="110%" height="110%"><feGaussianBlur stdDeviation="0.5"/></filter><filter id="b6" x="-5%" y="-5%" width="110%" height="110%"><feGaussianBlur stdDeviation="0.6"/></filter></defs></svg>
<div class="th" style="left:821px;top:220px;height:108px"><svg width="108" height="108" viewBox="0 0 108 108"><rect width="108" height="108" fill="#f4567b"/>
<g filter="url(#b5)">
<g id="cw"><path d="M47 41 C40 35 30 30 22 25 C16 21 10 17 7 13 C5 19 6 25 8 30 L11 33 C10 37 12 41 15 44 L19 46 C20 49 23 52 27 53 L31 53 C34 55 38 56 41 55 L46 52Z" fill="#4b5a9e"/>
<path d="M7 13 C10 17 16 21 22 25 C26 28 31 30 35 33 C28 34 22 36 17 40 C12 36 9 32 8 30 C6 25 5 19 7 13Z" fill="#4f9db6"/>
<path d="M15 44 L19 46 C20 49 23 52 27 53 L31 53 C34 55 38 56 41 55 L46 52 L46 46 C38 48 28 46 20 40Z" fill="#50398a"/>
<path d="M46 45 L8 22 M46 46 L10 32 M46 47 L16 43 M46 48 L25 51 M46 50 L35 54" stroke="#39427e" stroke-width="1" fill="none" opacity=".8"/>
<path d="M44 42 L12 20 M44 44 L12 28 M40 44 L18 38" stroke="#8cc6d4" stroke-width=".9" fill="none" opacity=".7"/>
<path d="M30 36 L20 44 M36 42 L28 50" stroke="#c9a0c8" stroke-width=".8" fill="none" opacity=".7"/></g>
<use href="#cw" transform="translate(109 0) scale(-1 1)"/>
<path d="M47 40 C44 48 43 58 46 66 C49 73 52 77 54.5 79 C57 77 61 73 63 66 C66 58 65 48 62 40 C58 37 51 37 47 40Z" fill="#5f4a96"/>
<path d="M47 42 C44 50 44 58 47 65 L53 54 L51 41Z" fill="#e9dcae"/><path d="M54 54 L60 44 L62 56 L56 70Z" fill="#7b5fae"/>
<path d="M50 74 L48 92 L51 94 L53 77Z M58 77 L58 94 L61 92 L60 74Z" fill="#7a64ae"/>
<path d="M47 91 h4 v3.5 h-4z M57.5 91 h4 v3.5 h-4z" fill="#b9a6b8"/>
<path d="M48 24 C47 30 48.5 37 51 41 C53 44 56 44 58 41 C60.5 37 62 30 61 24 C57 21.5 52 21.5 48 24Z" fill="#5b3f8a"/>
<path d="M52.5 24 C51.5 30 52.5 35 54.5 39 C56.5 35 57.5 30 56.5 24Z" fill="#f1e2b4"/>
<path d="M46 28 L50 27 L50 30Z M63 28 L59 27 L59 30Z" fill="#d84a78"/>
<path d="M51.5 39 h6 v4 h-6z" fill="#d64a66"/>
<path d="M47 25 C43 23 40.5 19 41.5 15 C43.5 19 46 21 49 22Z M62 25 C66 23 68.5 19 67.5 15 C65.5 19 63 21 60 22Z" fill="#5a3a7a"/>
<path d="M50.5 22 C49 17 51.5 13 54.5 11 C58 14 60 18 58.5 22Z" fill="#dd5a3f"/><path d="M56 21 C58 19 59 17 58.5 15 L61 19Z" fill="#3f9ab0"/>
<path d="M63 67 C68 66 72 63 76 62" fill="none" stroke="#6a4da0" stroke-width="1.4"/>
<path d="M75 61 C78 58 83 58 86 59.5 C84 64 78 65 75 63Z" fill="#e8703a"/>
</g></svg></div>
<div class="th" style="left:938px;top:220px;height:108px"><svg width="108" height="108" viewBox="0 0 108 108"><rect width="108" height="108" fill="#fcd070"/>
<g stroke="#28343f" stroke-width="1.4" stroke-linejoin="round" stroke-linecap="round">
<path d="M47.5 40.5 L36.5 54.5" stroke-width="6.4"/><path d="M47.5 40.5 L36.5 54.5" stroke="#f7d3ab" stroke-width="3.8"/>
<path d="M47 75 L41.5 86" stroke-width="6.8"/><path d="M47 75 L41.5 86" stroke="#f7d3ab" stroke-width="4.2"/>
<path d="M57 75 L63 86" stroke-width="6.8"/><path d="M57 75 L63 86" stroke="#f7d3ab" stroke-width="4.2"/>
<path d="M49.5 36.5 Q52.5 35 55.5 37 L65.8 73 H38.8 Z" fill="#ee6a5f"/>
<path d="M55 46.5 L71 50.5" stroke-width="6.2"/><path d="M55 46.5 L71 50.5" stroke="#f7d3ab" stroke-width="3.6"/>
<circle cx="51.6" cy="25.3" r="7.5" fill="#f7d3ab"/>
<path d="M69 38 V57" stroke-width="1.5"/>
<g fill="#f3d45c" stroke-width="1.1"><circle cx="69" cy="28.5" r="2.7"/><circle cx="73.3" cy="31" r="2.7"/><circle cx="73.3" cy="35.5" r="2.7"/><circle cx="69" cy="38" r="2.7"/><circle cx="64.7" cy="35.5" r="2.7"/><circle cx="64.7" cy="31" r="2.7"/></g>
<circle cx="69" cy="33.2" r="2" fill="#fff" stroke-width="1"/>
</g></svg></div>
<div class="th" style="left:1054.5px;top:220px;height:108px"><svg width="108" height="108" viewBox="0 0 108 108"><defs><linearGradient id="g3" x1="0" y1="0" x2="0" y2="1"><stop offset="0" stop-color="#3a9aa8"/><stop offset=".21" stop-color="#44a6b0"/><stop offset=".22" stop-color="#5ab6bc"/><stop offset=".5" stop-color="#74c6c8"/><stop offset=".75" stop-color="#a8dfe0"/><stop offset="1" stop-color="#86cfdb"/></linearGradient></defs>
<rect width="108" height="108" fill="url(#g3)"/>
<g filter="url(#b6)">
<g fill="#f3e3c2"><circle cx="29" cy="11" r="8.5"/><circle cx="19" cy="18" r="6"/><circle cx="40" cy="18" r="6.5"/><circle cx="48" cy="21" r="3.5"/><rect x="1" y="19" width="62" height="4.5" rx="2.2"/><circle cx="3" cy="13" r="4.5"/>
<circle cx="90" cy="8" r="10"/><circle cx="79" cy="15" r="6"/><circle cx="102" cy="14" r="8"/><ellipse cx="100" cy="31" rx="9" ry="5"/>
<circle cx="8" cy="50" r="8"/><circle cx="3" cy="42" r="5.5"/><circle cx="16" cy="53" r="4.5"/>
<circle cx="96" cy="53" r="8"/><circle cx="104" cy="46" r="6"/><circle cx="88" cy="57" r="4.5"/></g>
<ellipse cx="40" cy="78" rx="14" ry="5" fill="#d6efed" opacity=".8"/><rect x="30" y="98" width="52" height="2.5" fill="#c8ecec" opacity=".8"/>
<path d="M1 73 L10.5 59 L21 73Z M85 65 L101.5 47 L108 56 V65Z" fill="#3ba3a6"/>
<path d="M0 72 L19 73 L21 84 L27 92 L31 103 L0 108Z" fill="#b26a3c"/><path d="M0 76 L10 76 L12 98 L0 102Z" fill="#874c38"/><path d="M12 74 h4 v20 h-4z" fill="#c98550"/>
<path d="M82 66 L108 63 V108 H80Z" fill="#c98a48"/><path d="M86 66 h5 v40 h-5z M97 64.5 h4.5 v42 h-4.500z" fill="#ecc474"/><path d="M80 88 L84 86 V108 H78Z" fill="#7a4944"/><path d="M104 66 h4 v42 h-4z" fill="#a86a3c"/>
<path d="M0 100 C12 96 27 99 37 107 V108 H0Z" fill="#e0b256"/><path d="M31 108 L38 100 L44 108Z M70 108 L76 98 L80 108Z" fill="#3a6c7e"/>
<path d="M20 73 C25 77 20 84 25 92 C30 86 25 80 29 74 C26 76 23 71 20 73Z" fill="#f6cd4c"/><path d="M22 80 C24 83 23 86 25 89 C27 86 25 83 26 80Z" fill="#fbe9a0"/>
<path d="M1.5 46 C5 40 9 36 12 34.5 C18 30 25 27 31.7 25.3 L43.5 33 C41 35 39 37 37 38.4 C33 38 30 39 26.4 39.7 C22 39 18 40 13.3 41 C9 42 5 44 1.5 46Z" fill="#8a476a"/>
<path d="M67 34.5 L67 20 C70 17 74 15 78 14.7 C84 13 90 13.5 93.5 14.7 C99 15.5 104 17 106.7 19.3 C108 22 108 26 108 29 C104 27.5 101 27.5 97.5 28.5 C94 30 90 32 88 34.5 C85 32 81 31.5 78 32 C74 32 70 33 67 34.500Z" fill="#8a476a"/>
<path d="M31.7 25.3 L43.5 33 L26.4 39.7 M43.5 33 L13.3 41 M67 20 L67 34.5 M67 20 L88 34.5 M67 20 L97.5 28.5 M67 20 L106.7 19.3 M67 20 L78 14.7" stroke="#d8743a" stroke-width="1" fill="none"/>
<path d="M59 36 C64 38 68 44 70 52 C71 60 67 68 60 72 C54 75 48 80 47 86" fill="none" stroke="#2b7f6c" stroke-width="5" stroke-dasharray="2 1.3"/>
<path d="M26 65 C30 56 38 46 46 40 C52 36 60 37 64 43 C69 51 69 60 62 67 C55 73 46 78 45 86 C45 93 52 97 60 95 C67 93 70 87 66 83 C62 80 57 83 56 87" fill="none" stroke="#df7a30" stroke-width="3.2" stroke-linecap="round"/>
<path d="M46 40 C52 36 60 37 64 43 C67 48 68 54 66 58 L58 56 L50 50Z" fill="#e07c32"/><path d="M54 42 L62 40 L66 50 L60 50Z" fill="#7a4a5a" opacity=".7"/>
<path d="M22 66 L35 50 L41 54 L31 63 L34 70 L27 71Z" fill="#dc6a2c"/><path d="M30 50 L33 44 L36 50 L39 45 L41 52" fill="none" stroke="#2b7f6c" stroke-width="1.6"/>
<path d="M44 56 L42 66 L47 68 M58 55 L60 62 L65 60" stroke="#cc4430" stroke-width="2" fill="none"/>
<circle cx="68.5" cy="79" r="3.8" fill="none" stroke="#e88e8c" stroke-width="1.5"/>
<path d="M58 5 L62 9 L67 6 L63 12 L61 12Z" fill="#e2983a"/><path d="M92 39 l2 2 l2 -2" stroke="#e8c04c" stroke-width="1" fill="none"/>
</g></svg></div>
<div class="th" style="left:821px;top:336.5px;height:108px"><svg width="108" height="108" viewBox="0 0 108 108"><rect width="108" height="108" fill="#b9a9a0"/>
<g filter="url(#b4)">
<path d="M25 64 L50.5 75.5 L50.5 98.5 L25 82Z" fill="#c92f40"/>
<path d="M50.5 75.5 L78 66 L78 86 L50.5 98.500Z" fill="#e0404a"/>
<path d="M25 64 L52 55 L78 66 L50.5 76.500Z" fill="#ea6a5a"/>
<path d="M23.5 63 L50.5 75 L79.5 65 L79.5 68 L50.5 78.5 L23.5 66Z" fill="#d2303f"/>
<path d="M24 81 L50.5 97 L79 85 L79 88 L50.5 100 L24 84Z" fill="#b52838"/>
<rect x="56" y="80" width="13" height="5" rx="1.5" transform="rotate(-20 62 82)" fill="#f0b44c"/>
<ellipse cx="50.5" cy="64.5" rx="17" ry="7" fill="#2b8a95"/><ellipse cx="50.5" cy="64.5" rx="12" ry="4.8" fill="#2f9aa0"/>
<ellipse cx="51" cy="64" rx="5" ry="2" fill="#f0d34a"/>
<path d="M31 62 C30 54 30 48 36 45 C42 42 48 42 54 38 L57 43 C50 47 44 47 39 50 C35 52 35 56 35 62Z" fill="#e9c03f"/>
<path d="M28 54 L48 60" stroke="#f4f0ec" stroke-width="1.6"/><circle cx="45" cy="59" r="2.4" fill="#f4f0ec"/>
<path d="M70 8 C62 8 56 14 54 22 C51 30 51 40 55 48 C58 56 64 62 70 62 C76 62 82 56 85 48 C88 40 88 30 85 22 C82 14 77 8 70 8Z" fill="#f2c469" stroke="#e6864e" stroke-width="1.6"/>
<path d="M70 12 L58 36 M76 14 L58 36 M82 22 L58 36 M85 32 L58 36 M84 44 L58 36 M78 54 L58 36 M70 58 L58 36 M62 52 L58 36" stroke="#e9a04c" stroke-width="1.2"/>
<ellipse cx="59.5" cy="36" rx="5" ry="11" fill="#e94b42"/><ellipse cx="63" cy="36" rx="5" ry="9" fill="#f08a3c" opacity=".7"/>
</g></svg></div>
<div class="th" style="left:938px;top:336.5px;height:108px"><svg width="108" height="108" viewBox="0 0 108 108"><rect width="108" height="108" fill="#6fc79e"/>
<g stroke="#2c2a22" stroke-width="1.3" stroke-linejoin="round">
<path d="M40.5 31 H31 C27.5 31 27.5 36 28.5 40 C30 46 34 51 41.5 52.5" fill="none" stroke-width="4.8"/>
<path d="M40.5 31 H31 C27.5 31 27.5 36 28.5 40 C30 46 34 51 41.5 52.5" fill="none" stroke="#f5c34d" stroke-width="2.4"/>
<path d="M68.5 31 H78 C81.5 31 81.5 36 80.5 40 C79 46 75 51 67.5 52.5" fill="none" stroke-width="4.8"/>
<path d="M68.5 31 H78 C81.5 31 81.5 36 80.5 40 C79 46 75 51 67.5 52.5" fill="none" stroke="#f5c34d" stroke-width="2.4"/>
<path d="M40 27 H69.5 V44 C69.5 53 62 59.5 54.7 59.5 C47.5 59.5 40 53 40 44Z" fill="#f9d064"/>
<path d="M52 59.5 C52 64 51 67 48 69 H61.5 C58.5 67 57.5 64 57.5 59.500Z" fill="#f5c34d"/>
<rect x="44.5" y="69.5" width="20.5" height="7.5" rx="1" fill="#b98b6b"/>
<rect x="40.5" y="77" width="28.5" height="4" rx=".8" fill="#7b6b68"/>
<path d="M44.5 32 V48" stroke-width="1.5"/><path d="M50 73.3 H59.5" stroke-width="1.2"/>
</g></svg></div>
<div class="th" style="left:1054.5px;top:336.5px;height:108px"><svg width="108" height="108" viewBox="0 0 108 108"><rect width="108" height="108" fill="#d3d4d6"/>
<circle cx="54.2" cy="53.7" r="26" fill="#8fb4e2" stroke="#2d4a78" stroke-width="1"/>
<circle cx="56.5" cy="53.7" r="24.6" fill="#fdfdfd"/>
<path d="M57 28.6 A25 25 0 0 1 57 78.8 A12.8 12.8 0 0 1 57 53.7 A12.5 12.5 0 0 0 57 28.600Z" fill="#f4934d" stroke="#a8502c" stroke-width="1"/>
<path d="M60 29 C72 31 80 41 80.5 53.7 C80 66 72 76 60 78.5 C70 74 76 66 76 53.7 C76 42 70 33 60 29Z" fill="#d9703a"/>
<circle cx="55.2" cy="41.6" r="3.4" fill="#7fb0e6" stroke="#4a78b0" stroke-width=".8"/>
<circle cx="55.2" cy="66.2" r="3.1" fill="#fff" stroke="#a8502c" stroke-width=".8"/>
</svg></div>
<div class="th" style="left:821px;top:453px;height:108px"><svg width="108" height="108" viewBox="0 0 108 108"><rect width="108" height="108" fill="#cdeefa"/>
<path d="M53.3 84 C46 72 33.5 58 33.5 43.5 C33.5 32 42 23.5 53.3 23.5 C64.6 23.5 73.2 32 73.2 43.5 C73.2 58 60.6 72 53.3 84Z" fill="#f4a96e" stroke="#3b78a8" stroke-width="1.5" stroke-linejoin="round"/>
<circle cx="53.3" cy="43.4" r="11.6" fill="#f3fbff" stroke="#3b78a8" stroke-width="1.5"/>
<path d="M54.5 36 C58.5 36.5 61 39.5 61.3 43" fill="none" stroke="#7fb6de" stroke-width="1.3" stroke-linecap="round"/>
</svg></div>
<div class="th" style="left:938px;top:453px;height:108px"><svg width="108" height="108" viewBox="0 0 108 108"><defs><linearGradient id="g8" x1="0" y1="0" x2="0" y2="1"><stop offset="0" stop-color="#37a7a6"/><stop offset=".3" stop-color="#56bdb6"/><stop offset=".5" stop-color="#a5dcd0"/><stop offset=".68" stop-color="#f8f0d2"/></linearGradient><radialGradient id="s8" cx=".62" cy=".62" r=".3"><stop offset="0" stop-color="#fffbe6"/><stop offset="1" stop-color="#fffbe6" stop-opacity="0"/></radialGradient></defs>
<rect width="108" height="108" fill="url(#g8)"/><rect width="108" height="108" fill="url(#s8)"/>
<g filter="url(#b6)">
<g fill="#f6c6a8"><ellipse cx="4" cy="14" rx="8" ry="7"/><ellipse cx="12" cy="18" rx="10" ry="4"/><ellipse cx="4" cy="38" rx="9" ry="8"/><ellipse cx="12" cy="44" rx="8" ry="4"/><ellipse cx="104" cy="12" rx="8" ry="8"/><ellipse cx="96" cy="18" rx="10" ry="4"/><ellipse cx="104" cy="38" rx="9" ry="8"/><ellipse cx="98" cy="44" rx="10" ry="4"/></g>
<g fill="#fbf3e0"><ellipse cx="2" cy="10" rx="5" ry="5"/><ellipse cx="22" cy="9" rx="5" ry="2"/><ellipse cx="85" cy="9" rx="5" ry="2"/><ellipse cx="106" cy="8" rx="4" ry="5"/><ellipse cx="10" cy="53" rx="8" ry="2.5"/><ellipse cx="98" cy="53" rx="8" ry="2.5"/><ellipse cx="6" cy="62" rx="10" ry="4"/><ellipse cx="100" cy="62" rx="10" ry="4"/></g>
<path d="M0 70 C4 66 10 68 14 70 V76 H0Z M92 72 C98 66 104 68 108 70 V78 H92Z" fill="#6a9a58"/>
<path d="M0 74 C16 72 30 74 44 76 L0 92Z" fill="#63b04e"/><path d="M64 76 C80 74 94 74 108 74 V92Z" fill="#f0c63c"/>
<path d="M44 76 L64 76 L108 90 V108 H0 V92Z" fill="#4a3a48"/><path d="M0 92 L0 108 H108 V90 L84 102 H26Z" fill="#37344d"/><path d="M64 76 L108 90 V94 L60 79Z" fill="#8a4450"/>
<g fill="#a8b94a"><ellipse cx="10" cy="92" rx="5" ry="3"/><ellipse cx="26" cy="96" rx="6" ry="3.5"/><ellipse cx="82" cy="96" rx="6" ry="3.5"/><ellipse cx="98" cy="92" rx="6" ry="3"/><ellipse cx="20" cy="86" rx="3" ry="2"/></g>
<path d="M53 74 L30 84 M53 76 L38 96 M54 76 L50 100 M55 76 L60 100 M56 76 L72 96 M56 74 L80 86 M44 88 L34 92 M62 88 L72 92 M52 90 L44 100 M58 90 L66 100" stroke="#f3d7b8" stroke-width="1.3" fill="none"/>
<path d="M51 52 C51 62 49 70 42 77 L53 78 L66 77 C60 70 57 62 57 52Z" fill="#c2645a"/><path d="M53.5 40 V60" stroke="#2f9a9a" stroke-width="2"/>
<path d="M36 48 L52 58 M72 48 L56 58 M44 44 L53 54 M64 44 L55 54" stroke="#8a4a44" stroke-width="1.6" fill="none"/>
<g><ellipse cx="40" cy="36" rx="14" ry="12" fill="#63a04a"/><ellipse cx="66" cy="36" rx="14" ry="12" fill="#9cb848"/><ellipse cx="54" cy="30" rx="12" ry="12" fill="#7aae48"/><ellipse cx="27" cy="46" rx="11" ry="10" fill="#5f9e4a"/><ellipse cx="31" cy="30" rx="9" ry="8" fill="#5f9e4a"/><ellipse cx="40" cy="22" rx="9" ry="8" fill="#6fae48"/><ellipse cx="54" cy="16" rx="10" ry="8" fill="#9cc84a"/><ellipse cx="68" cy="22" rx="9" ry="8" fill="#a8cc4a"/><ellipse cx="76" cy="32" rx="9" ry="8" fill="#b4c84a"/><ellipse cx="82" cy="46" rx="10" ry="9" fill="#d9b83a"/><ellipse cx="72" cy="54" rx="8" ry="5" fill="#e0c244"/><ellipse cx="34" cy="54" rx="8" ry="5" fill="#5f9e4a"/>
<ellipse cx="54" cy="28" rx="10" ry="7" fill="#8ab848"/><ellipse cx="42" cy="38" rx="10" ry="7" fill="#7aae48"/><ellipse cx="66" cy="40" rx="10" ry="7" fill="#a4b848"/><ellipse cx="54" cy="20" rx="7" ry="4" fill="#4f9a4a" opacity=".6"/></g>
</g></svg></div>
<div class="th" style="left:1054.5px;top:453px;height:108px"><svg width="108" height="108" viewBox="0 0 108 108"><rect width="108" height="108" fill="#0d5fa5"/>
<path d="M43 34.5 L76.8 27.8 V37 L43 44.300Z" fill="#f48f73"/><path d="M43 34.5 L54 32.3 L59 40.8 L43 44.300Z" fill="#f9c6a6"/>
<rect x="43" y="34.5" width="2.2" height="35" fill="#fad0b2"/><rect x="74.6" y="28" width="2.2" height="37" fill="#f3a88e"/>
<ellipse cx="35.6" cy="69.2" rx="9.3" ry="8" fill="#fbd6ae"/>
<ellipse cx="67.3" cy="64.5" rx="9.5" ry="7.7" fill="#f5a283"/><path d="M67.3 56.8 A9.5 7.7 0 0 0 67.3 72.200Z" fill="#f8b798"/>
</svg></div>
<div class="th" style="left:821px;top:570px;height:108px"><svg width="108" height="108" viewBox="0 0 108 108"><rect width="108" height="108" fill="#54263f"/>
<g filter="url(#b5)">
<g fill="#9ec4e2"><circle cx="26" cy="62" r="6"/><circle cx="22" cy="70" r="6"/><circle cx="26" cy="78" r="6"/><circle cx="33" cy="84" r="6.5"/><circle cx="42" cy="89" r="6"/><circle cx="52" cy="91" r="5.5"/><circle cx="62" cy="90" r="6"/><circle cx="72" cy="86" r="6.5"/><circle cx="80" cy="79" r="6.5"/><circle cx="86" cy="70" r="6"/><circle cx="84" cy="62" r="6"/><circle cx="34" cy="60" r="5"/><circle cx="76" cy="60" r="5"/><circle cx="44" cy="78" r="8"/><circle cx="66" cy="76" r="8"/><circle cx="36" cy="70" r="7"/><circle cx="74" cy="70" r="7"/><circle cx="54" cy="82" r="9"/><circle cx="47" cy="70" r="6"/><circle cx="63" cy="70" r="6"/></g>
<g fill="#cfe0f0"><circle cx="28" cy="66" r="2.5"/><circle cx="80" cy="66" r="2.5"/><circle cx="40" cy="86" r="2.5"/><circle cx="70" cy="84" r="2.5"/></g>
<g id="pw"><path d="M30.8 14.2 C27 13 25 14 23.7 14.8 C20 17 18 19 16.6 21.3 C15 25 14.5 28 14.8 30.8 C15 35 15.5 38 16.6 40.2 C18 44 21 47 23.7 49.7 C27 53 31 55 35.5 55.6 C40 57 44 58 47.3 58 L53.2 55.6 L52 47.3 C50 45 49 43 47.3 41.4 C45 39 42 37 40.2 35.5 C37 33 35 31 33.1 28.4 C31 25 30 23 29.6 20.1 C29.5 18 30 16 30.8 14.200Z" fill="#ef8a36"/>
<path d="M30.8 14.2 C27 13 25 14 23.7 14.8 C20 17 18 19 16.6 21.3 C15 25 14.5 28 14.8 30.8 C15 35 15.5 38 16.6 40.2 C18 44 21 47 23.7 49.7 C22 45 20.5 41 20 37 C19.5 32 20 27 22 23 C24 19 27 16 30.8 14.200Z" fill="#f6c04e"/>
<path d="M29 22 C30 29 35 36 42 41 C46 44 49 47 52 50 L52 47.3 C50 45 49 43 47.3 41.4 C45 39 42 37 40.2 35.5 C37 33 35 31 33.1 28.4 C31 25 30 23 29.6 20.100Z" fill="#f4a640"/>
<path d="M24 30 C27 38 34 45 44 49 C47 50 50 51 52.5 52 L53 55.6 L47.3 58 C44 58 40 57 35.5 55.6 C31 52 27 47 25.5 42 C24.5 38 24 34 24 30Z" fill="#d8453c"/>
<path d="M23.7 49.7 C27 53 31 55 35.5 55.6 C40 57 44 58 47.3 58 L50 57 C44 56 38 54 33 51 C29 49 26 47 23.7 49.700Z" fill="#f4b244"/>
<path d="M21 26 C24 36 32 46 46 52 M18 33 C21 41 28 49 40 54 M26 20 C28 30 36 40 48 46" stroke="#e2602f" stroke-width="1" fill="none"/></g>
<use href="#pw" transform="translate(109 0) scale(-1 1)"/>
<path d="M51 44 C50 40 52 35 54.5 33 C57 35 59 40 58 44 C60 50 58 56 54.5 60 C51 56 49 50 51 44Z" fill="#a9c9e8"/><path d="M51.5 34 C50 30 53 27 57 27 C56 30 58 32 56 35Z" fill="#f08a3c"/><path d="M52 48 L54.5 58 L57 48Z" fill="#6a5a8a"/>
<path d="M54.5 57 C50 64 42 70 34 72 C40 78 50 76 54 69 C51 78 53 86 60 92 C63 84 61 75 58 69 C63 76 72 79 80 74 C71 72 62 65 57 57Z" fill="#df4a3c"/>
<path d="M53 62 C48 70 40 74 33 72 C40 68 47 65 51 58Z M60 71 C65 78 74 78 79 72 C72 72 65 68 60 63Z" fill="#f6b445"/>
<path d="M58 64 C62 72 70 76 78 72 C72 76 64 76 58 70Z" fill="#f7c552"/><path d="M50 64 C46 72 40 78 34 78 C42 80 48 76 52 68Z" fill="#ee7a3a"/><path d="M48 78 C50 84 54 88 58 90 C54 84 52 80 52 74Z" fill="#c83a4a"/><path d="M54 70 C54 78 56 84 60 90 C58 82 58 76 57 70Z" fill="#f7c552"/><path d="M62 78 C68 84 74 82 76 78 C70 80 66 78 62 74Z" fill="#7aa6d8"/>
</g></svg></div>
<div class="th" style="left:938px;top:570px;height:108px"><svg width="108" height="108" viewBox="0 0 108 108"><defs><linearGradient id="g11" x1="0" y1="0" x2=".3" y2="1"><stop offset="0" stop-color="#2b3168"/><stop offset=".45" stop-color="#2f5a8c"/><stop offset="1" stop-color="#2e7a9e"/></linearGradient></defs>
<rect width="108" height="108" fill="url(#g11)"/>
<g filter="url(#b5)">
<path d="M22 62 C50 66 84 82 108 98 V108 H0 V86Z" fill="#7cc6cf"/><path d="M24 60 C52 64 84 80 108 96 V100 C84 84 52 68 22 66Z" fill="#eef6f4"/>
<path d="M40 92 C60 90 80 96 100 106 M56 98 C70 98 84 102 96 108 M10 100 C20 100 30 104 36 108 M60 84 C74 86 90 94 104 102" stroke="#e6f4f2" stroke-width="2" fill="none"/>
<circle cx="14" cy="20" r="5.5" fill="#63c0c4"/><path d="M9 19 h10" stroke="#8fd6d6" stroke-width="1.2"/><circle cx="97" cy="76" r="2.6" fill="#f0c078"/><circle cx="103" cy="86" r="2" fill="#dff0ee"/>
<g fill="#dfe8f4"><circle cx="26" cy="5" r=".8"/><circle cx="52" cy="26" r=".7"/><circle cx="70" cy="12" r=".7"/><circle cx="100" cy="4" r=".9"/><circle cx="90" cy="64" r=".7"/><circle cx="104" cy="32" r=".7"/><circle cx="78" cy="4" r=".7"/><circle cx="60" cy="6" r=".6"/></g>
<path d="M48 1 L48 12 L42 32 L14 100 L0 108 V60 L24 22Z" fill="#e9e1c8"/><path d="M32 28 L42 32 L14 100 L0 108 V86Z" fill="#8f8cb4"/><path d="M24 40 L30 43 L8 86 L2 84Z" fill="#c9c2b4"/>
<path d="M48 1 L48 12 L42 32 L24 22Z" fill="#f08a2c"/><path d="M48 1 L48.5 9 L44 5Z" fill="#f4ead2"/><path d="M24 22 L42 32 L43.5 28.5 L26 18.500Z" fill="#3a3a6a"/><path d="M34 14 L46 20 L47 16 L38 10Z" fill="#f6a848"/>
<path d="M20 64 L8 84 L14 94 L18 80Z" fill="#f08a2c"/><path d="M0 76 L8 84 L14 96 L4 106 L0 108Z" fill="#3f3f72"/><path d="M2 86 L10 92 M0 94 L8 100" stroke="#8a8ab0" stroke-width="1"/>
<g stroke-linecap="round" stroke-linejoin="round" fill="none">
<rect x="68" y="9" width="12" height="14" rx="2" fill="#d8dce8" stroke="none" transform="rotate(25 74 16)"/>
<path d="M72 50 L57 65 L36 85" stroke="#ececec" stroke-width="9.5"/><path d="M76 54 L63 74 L40 95" stroke="#f6f6f6" stroke-width="9.5"/>
<path d="M81 30 L73 48" stroke="#f2f2f2" stroke-width="17"/>
<path d="M72 28 L58 36 L51 45" stroke="#f4f4f4" stroke-width="8"/><path d="M89 35 L96 45 L101 34" stroke="#f4f4f4" stroke-width="8"/>
<circle cx="50.5" cy="47" r="4.5" fill="#f8f8f8" stroke="none"/><circle cx="102" cy="32" r="4.5" fill="#f8f8f8" stroke="none"/>
<path d="M66 54 L73 60 M60 60 L67 66 M55 66 L61 71 M68 66 L76 70 M62 75 L70 79 M57 82 L64 86 M64 31 L60 38 M93 40 L99 41" stroke="#f08a2c" stroke-width="2.6" stroke-linecap="butt"/>
<path d="M31 80 L41 89 M35 91 L45 99" stroke="#26264e" stroke-width="3" stroke-linecap="butt"/>
</g>
<circle cx="88.5" cy="19.5" r="11.5" fill="#f0f0f0"/><ellipse cx="90" cy="19" rx="8.5" ry="7.8" transform="rotate(25 90 19)" fill="#25275a"/><path d="M84 14 C87 11 92 11 95 13" stroke="#6a6a9a" stroke-width="1.2" fill="none"/>
<rect x="76" y="33" width="10" height="6" fill="#e8b44c" transform="rotate(22 81 36)"/><path d="M72 40 L84 46" stroke="#3a3a6a" stroke-width="1.5"/>
</g></svg></div>
<div class="th" style="left:1054.5px;top:570px;height:108px"><svg width="108" height="108" viewBox="0 0 108 108"><rect width="108" height="108" fill="#2a2878"/>
<g filter="url(#b5)">
<g fill="#a9cde6"><circle cx="22" cy="82" r="6"/><circle cx="30" cy="88" r="7"/><circle cx="40" cy="93" r="6"/><circle cx="50" cy="95" r="6"/><circle cx="60" cy="95" r="6"/><circle cx="70" cy="92" r="6.5"/><circle cx="80" cy="88" r="7"/><circle cx="89" cy="82" r="6"/><circle cx="94" cy="74" r="4"/><circle cx="16" cy="76" r="3.5"/><rect x="24" y="80" width="62" height="12"/></g>
<g fill="#d6e6f2"><circle cx="28" cy="84" r="3"/><circle cx="44" cy="92" r="3"/><circle cx="66" cy="92" r="3"/><circle cx="84" cy="82" r="3"/></g>
<path d="M30 74 C20 62 26 46 40 40 C34 50 34 62 38 74Z M80 74 C92 62 86 44 70 38 C78 50 78 62 74 74Z" fill="#e3eaf5"/>
<path d="M84 70 C92 70 96 64 92 58 C98 62 98 72 90 76 C86 78 82 76 84 70Z M24 72 C16 72 12 66 16 60 C10 64 10 74 18 78 C22 80 26 78 24 72Z" fill="#c8daee"/>
<path d="M54 12 L50.5 32 L49 58 L38 86 H70 L60 58 L57.5 32Z" fill="#b6a6d8"/><path d="M54 12 L50.5 32 L49 58 L43 74 L54 60Z" fill="#d8c8ea"/>
<path d="M43.5 28 L40 40 L38 84 H47 L47.5 40Z" fill="#8c7aba"/><path d="M65.5 28 L62 40 L64 84 H73 L70 40Z" fill="#5562a6"/><path d="M36 58 L46 84 H30Z M72 56 L82 86 H62Z" fill="#5a7cb2"/><path d="M40 60 L46 84 H38Z" fill="#7a9ac8"/>
<path d="M47 90 V74 C47 67 61 67 61 74 V90Z" fill="#f2c062"/><path d="M50 90 V76 C50 71 58 71 58 76 V90Z" fill="#fbe8ae"/><rect x="53" y="79" width="4" height="5" fill="#8a6a5a"/><ellipse cx="54" cy="90" rx="8" ry="2.5" fill="#e6f0f8"/>
<circle cx="54" cy="38" r="1" fill="#f7d87a"/><circle cx="54" cy="58" r="1.2" fill="#f7d87a"/><circle cx="44" cy="56" r="1" fill="#f7d87a"/><circle cx="66" cy="55" r="1" fill="#f7d87a"/>
<g fill="none" stroke="#dfe6f6" stroke-width="1.2"><circle cx="15" cy="66" r="5"/><circle cx="15" cy="66" r="2"/><circle cx="92" cy="64" r="5"/><circle cx="92" cy="64" r="2"/><circle cx="67" cy="19" r="3"/><path d="M24 54 C26 44 36 40 38 30 M84 54 C82 44 74 40 70 32 M30 40 C28 34 32 30 36 28 M78 40 C82 34 78 30 74 28"/></g>
<g fill="#e8eefa"><circle cx="32" cy="30" r="1.2"/><circle cx="24" cy="36" r="1"/><circle cx="20" cy="50" r="1.2"/><circle cx="46" cy="22" r="1"/><circle cx="73" cy="27" r="2"/><circle cx="82" cy="32" r="1"/><circle cx="88" cy="48" r="1.2"/><circle cx="61" cy="17" r="1"/><circle cx="16" cy="56" r="1"/><circle cx="92" cy="54" r="1"/><circle cx="36" cy="36" r="1.5"/><circle cx="78" cy="38" r="1.5"/><circle cx="26" cy="44" r="1"/><circle cx="84" cy="42" r="1"/><circle cx="40" cy="24" r="1"/><circle cx="70" cy="22" r="1"/><circle cx="22" cy="58" r=".8"/><circle cx="86" cy="58" r=".8"/></g>
</g></svg></div>
<div class="th" style="left:821px;top:686.5px;height:36px"><svg width="108" height="36" viewBox="0 0 108 36"><defs><linearGradient id="g13" x1="0" y1="0" x2="0" y2="1"><stop offset="0" stop-color="#ee7f86"/><stop offset="1" stop-color="#f7b79c"/></linearGradient></defs>
<rect width="108" height="36" fill="url(#g13)"/>
<g filter="url(#b4)">
<path d="M37 36 V24 L40 20 L43 24 V36Z M47 36 V25 L51 21 L55 25 V36Z M67 36 V32 L70 29 L73 32 V36Z" fill="#5a8aa6"/><path d="M57 36 V16 L60 8 L63 16 V36Z" fill="#6a9cb6"/><path d="M28 36 V24 h5 v12z" fill="#4f7a94"/>
<path d="M0 0 H20 L27 8 L24 10 V22 L36 30 L43 36 H0Z" fill="#2a2440"/>
<g fill="#e8503c"><rect x="4" y="3" width="3" height="5"/><rect x="12" y="8" width="3" height="5"/><rect x="4" y="16" width="3" height="6"/><rect x="14" y="22" width="3" height="5"/><rect x="4" y="29" width="3" height="5"/></g>
<path d="M82 0 L78 10 V36 H108 V0Z" fill="#3a2f50"/><g fill="#e8846a"><rect x="86" y="4" width="2.2" height="32"/><rect x="92" y="2" width="2.2" height="34"/><rect x="98" y="0" width="2.2" height="36"/><rect x="104" y="0" width="2.2" height="36"/></g>
</g></svg></div>
<div class="th" style="left:938px;top:686.5px;height:36px"><svg width="108" height="36" viewBox="0 0 108 36"><defs><linearGradient id="g14" x1="0" y1="0" x2="0" y2="1"><stop offset="0" stop-color="#3c82cc"/><stop offset="1" stop-color="#62a8e4"/></linearGradient></defs>
<rect width="108" height="36" fill="url(#g14)"/>
<g filter="url(#b4)">
<g fill="#f4e6cc"><ellipse cx="58" cy="11" rx="6" ry="2.5"/><ellipse cx="57" cy="9" rx="3" ry="2.5"/><ellipse cx="96" cy="6" rx="9" ry="6"/><ellipse cx="88" cy="11" rx="8" ry="3"/><ellipse cx="104" cy="10" rx="6" ry="5" fill="#f2c8c0"/><ellipse cx="96" cy="24" rx="8" ry="4"/><ellipse cx="104" cy="26" rx="6" ry="4"/><ellipse cx="88" cy="27" rx="8" ry="2"/><ellipse cx="98" cy="35" rx="10" ry="2"/></g>
<path d="M0 4 C8 2 20 2 28 8 C34 14 36 20 30 24 C20 28 8 26 0 24Z" fill="#f0a03c"/><path d="M0 8 C8 6 16 8 22 14 C14 16 6 16 0 14Z" fill="#f6c05a"/>
<path d="M30 26 C36 20 48 20 54 26 C58 30 60 34 60 36 H28Z" fill="#ee8a2c"/><path d="M0 22 C12 24 26 24 36 22 L38 28 L24 30 L4 30Z" fill="#a8503c"/>
<path d="M4 24 V36 H8 V26Z M20 28 V36 h3 V28Z" fill="#8a4a3a"/><path d="M0 30 C8 28 16 30 20 36 H0Z" fill="#5a9ad8"/>
</g></svg></div>
<div class="th" style="left:1054.5px;top:686.5px;height:36px"><svg width="108" height="36" viewBox="0 0 108 36"><rect width="108" height="36" fill="#9dcfd0"/>
<g filter="url(#b4)">
<g fill="#f6e4d4"><ellipse cx="30" cy="18" rx="10" ry="10"/><ellipse cx="40" cy="28" rx="14" ry="9"/><ellipse cx="50" cy="12" rx="4" ry="3"/><ellipse cx="36" cy="8" rx="3" ry="2"/><ellipse cx="56" cy="34" rx="10" ry="4"/></g>
<g fill="#f2a6ae"><ellipse cx="8" cy="16" rx="10" ry="9"/><ellipse cx="20" cy="26" rx="10" ry="8"/><ellipse cx="6" cy="30" rx="9" ry="7"/><ellipse cx="28" cy="33" rx="8" ry="4"/></g>
<path d="M6 22 V36 M6 30 L12 26" stroke="#5a3a4a" stroke-width="1" fill="none"/>
<g fill="#ee5a44"><ellipse cx="72" cy="6" rx="12" ry="6"/><ellipse cx="92" cy="4" rx="14" ry="5"/><ellipse cx="64" cy="22" rx="10" ry="6"/><ellipse cx="78" cy="24" rx="8" ry="5"/><ellipse cx="100" cy="16" rx="8" ry="8"/><ellipse cx="70" cy="34" rx="10" ry="3"/></g>
<path d="M90 36 L88 22 L82 12 M88 22 L96 10 M92 36 L100 22 L104 8 M100 22 L94 16 M84 36 L80 28" stroke="#2f2a44" stroke-width="1.3" fill="none"/>
</g></svg></div>
<!--THUMBS-END-->
<span class="t d" style="left:821px;top:162px;font-size:13px;color:#ececec">提示灵感</span>
<span class="t d" style="left:821px;top:182.5px;font-size:11.2px;font-weight:500;color:#e2e2e2">探索重新合成和制作您自己的作品的提示</span>

<div class="abs" style="left:1164px;top:229px;width:8.5px;height:299px;background:#5e5e5e;border-radius:4px"></div>
<svg style="left:1164px;top:222px" width="9" height="6"><path d="M1 4.500 L4.500 1.200 L8 4.500" fill="none" stroke="#9a9a9a" stroke-width="1.200"/></svg>
<svg style="left:1164px;top:712px" width="9" height="6"><path d="M1 1.200 L4.500 4.500 L8 1.200" fill="none" stroke="#9a9a9a" stroke-width="1.200"/></svg>
<div class="abs" style="left:822px;top:730px;width:350px;height:40px;background:#494949;border-radius:2px"></div>
<svg style="left:832px;top:738px" width="13" height="15" viewBox="0 0 13 15"><path d="M6.500 1 L12 3 V7.500 C12 10.500 9.500 13 6.500 14 C3.500 13 1 10.500 1 7.500 V3Z" fill="none" stroke="#dedede" stroke-width="1.100"/><path d="M4 7.500 L6 9.500 L9.200 5.500" fill="none" stroke="#dedede" stroke-width="1.100"/></svg>
<span class="t d" style="left:852px;top:739.5px;font-size:12px;color:#e6e6e6">您的内容均不会用于训练生成式 AI 模型。</span>
<span class="t d" style="left:852px;top:751px;font-size:9px;font-weight:bold;color:#f0f0f0;border-bottom:1px solid #e0e0e0;line-height:10px">了解详细信息</span>
<svg style="left:1155px;top:741px" width="6" height="6"><path d="M.5 .5 L5.500 5.500 M5.500 .5 L.5 5.500" stroke="#e0e0e0" stroke-width="1"/></svg>


</body>
</html>
